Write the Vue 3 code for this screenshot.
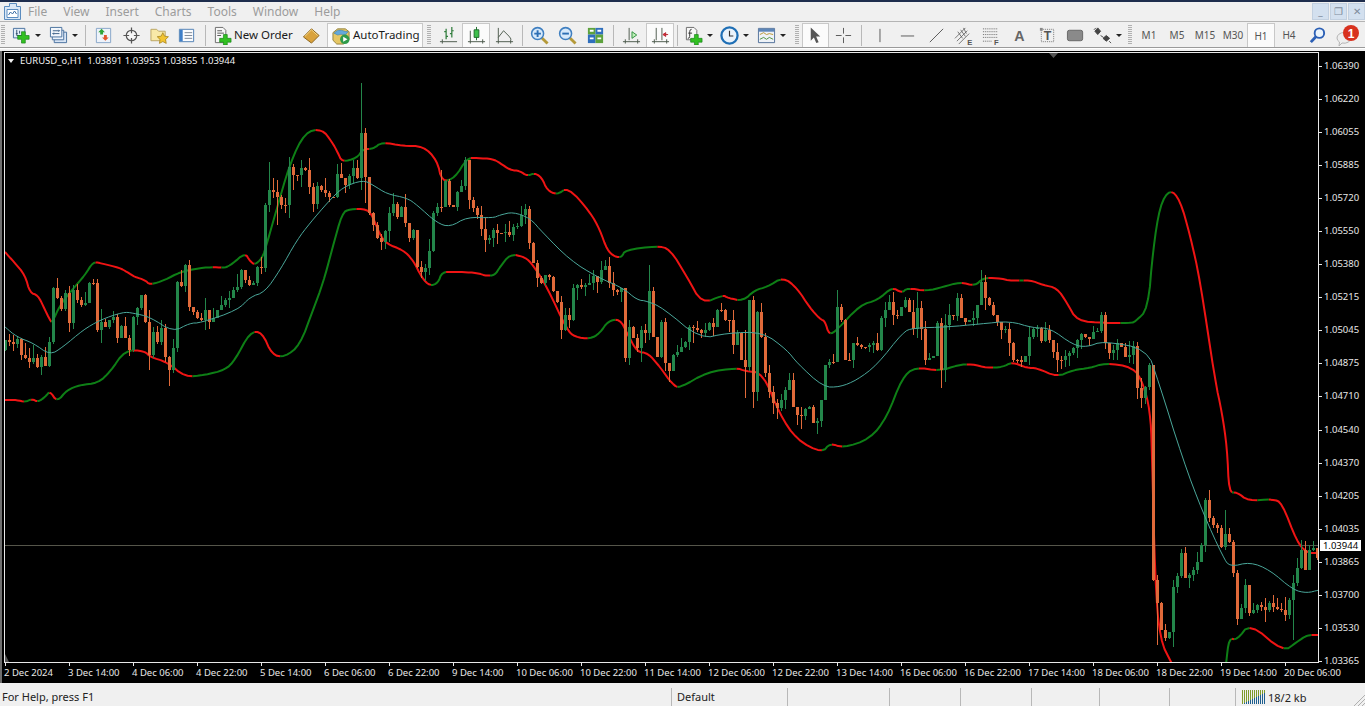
<script setup>
// bands and candles are read off the chart in page pixels, x = 5 + 4n
const upper = [[5,252],[14,262],[25,275],[30,293],[38,295],[45,310],[50,320],[52,323],[60,305],[72,290],[85,275],[93,262],[100,263],[120,268],[127,272],[135,277],[145,280],[150,285],[165,280],[180,272],[200,268],[215,267],[225,268],[232,264],[245,253],[250,261],[255,265],[262,258],[265,250],[275,215],[290,163],[305,132],[322,129],[332,142],[338,153],[342,162],[357,158],[363,149],[373,149],[382,142],[403,146],[423,146],[437,160],[442,182],[455,178],[467,158],[477,158],[493,159],[500,163],[510,170],[520,171],[527,176],[535,173],[542,178],[547,190],[557,195],[568,187],[590,212],[600,230],[607,250],[615,257],[622,257],[625,250],[657,246],[670,249],[687,277],[702,304],[723,295],[728,298],[743,301],[755,290],[767,287],[783,277],[797,288],[810,308],[820,319],[825,321],[829,335],[837,330],[860,305],[878,300],[892,287],[902,293],[907,288],[927,291],[943,287],[960,282],[975,286],[983,278],[997,278],[1013,281],[1030,280],[1043,285],[1057,288],[1067,303],[1077,321],[1105,323],[1130,323],[1135,322],[1148,309],[1153,250],[1160,205],[1170,189],[1180,200],[1190,235],[1200,280],[1215,380],[1222,413],[1227,447],[1229,493],[1237,492],[1248,501],[1273,499],[1282,503],[1297,542],[1307,553],[1319,553]]
const lower = [[5,400],[17,400],[25,402],[32,399],[38,402],[45,397],[50,391],[57,402],[67,390],[80,385],[98,383],[110,372],[125,350],[145,351],[150,357],[167,362],[185,377],[205,375],[225,370],[235,360],[250,332],[262,332],[272,355],[285,357],[300,345],[313,310],[323,283],[332,250],[342,213],[350,209],[367,209],[373,217],[380,235],[387,244],[403,250],[413,260],[422,278],[430,286],[438,283],[442,272],[453,272],[463,272],[477,273],[487,276],[495,275],[500,267],[510,254],[525,257],[533,265],[547,287],[567,330],[575,337],[590,339],[600,333],[608,321],[620,319],[627,333],[637,352],[648,353],[660,367],[673,385],[680,388],[707,372],[737,368],[745,371],[763,373],[780,415],[797,440],[822,453],[830,443],[843,448],[870,439],[887,417],[902,378],[915,367],[940,371],[958,365],[972,364],[987,368],[1003,367],[1012,362],[1027,368],[1037,368],[1057,377],[1073,370],[1090,368],[1105,363],[1133,367],[1143,383],[1150,410],[1152,450],[1155,580],[1160,640],[1172,664]]
const lower2 = [[1226,664],[1229,638],[1237,640],[1250,623],[1283,652],[1297,642],[1307,635],[1319,635]]
const middle = [[5,327],[17,337],[33,343],[50,355],[63,347],[83,330],[100,320],[123,312],[133,313],[150,317],[173,332],[190,323],[200,323],[238,310],[250,297],[265,292],[280,270],[297,240],[310,223],[328,202],[343,187],[363,180],[373,185],[387,194],[407,198],[417,205],[437,223],[450,227],[467,217],[493,218],[500,215],[513,212],[530,218],[543,233],[570,260],[597,277],[623,288],[637,300],[647,301],[663,308],[700,339],[727,333],[763,332],[787,350],[797,363],[823,387],[840,387],[857,380],[877,365],[903,332],[913,328],[947,327],[980,324],[1010,321],[1033,328],[1050,328],[1073,345],[1087,347],[1103,341],[1147,349],[1158,380],[1183,460],[1203,513],[1223,557],[1230,567],[1250,562],[1270,570],[1293,590],[1307,593],[1319,590]]

const sections = [
  [5, [340,342,344,339,355,358,362,358,367,357,366,342,288,298,309,293,323,290,300,305,303,283,283,330,322,327,320,317,338,326,338,350,317,308,295,322,355,332,342,328,357,370,348,282,286,265,307,312,318]],
  [201, [320,310,322,318,310,305,300,298,290,287,270,280,285,283,267,268,205,190,192,197,205,205,167,175,175,168,170,187,204,186,190,193,197,197,174,178,185,176,168,178,133,177]],
  [369, [213,225,238,242,231,213,204,217,207,223,238,230,267,272,268,251,213,207,207,181,205,207,192,186,160,200,208,215,229,240,238,230,233]],
  [505, [232,235,227,226,215,209,243,263,278,283,275,277,291,302,330,315,320,288,285,287,285,283,276,282,270,266,283,290,292,288,358,327,338,348,330,333,291,337,357,322,363,371,355,352,347,342,327,328,330,333,330,323,327,310,310,320,320,345,333,360,367,300,392,312,337,373,392,403,408,400,390,380,407,415,416,409,407,423,421,400,365,362,362,307,320,360,360,343,345,347,347,345,343,350,318,310,302,315,316,307,300,312,329,308,329,360,358,356,323,370,325,315,316,298,318,322,320,318,305,282,298,305,315,322,330,329,343,360,360,362,356,337,329,328,341,330,340,352,360,360,356,353,348,340,334,337,339,332,331,315,343,353,350,343,347,357,355,346,388,398,387,365,580,603,630,638,632,587,576,553,578,575,570,562,545,500,518,525,528,547,534,542,573,619,608,585,613,610,605,607,610,603,607,609,610,615,600,583,568,550,570,550,548,558]]
]
// the few wicks that stand out
const longWicks = {
  361: [83, 190], 365: [128, 203], 265: [203, 272], 269: [162, 212], 277: [180, 225], 441: [170, 212],
  649: [265, 340], 629: [320, 365], 753: [296, 408], 745: [330, 398], 1157: [575, 645], 1293: [575, 640],
  837: [290, 335], 913: [300, 335], 917: [292, 338], 941: [318, 388], 981: [270, 305], 1209: [490, 522],
  985: [275, 310], 1225: [510, 550], 1237: [570, 625]
}

let seed = 7
function rnd() {
  seed = (seed * 16807) % 2147483647
  return seed / 2147483647
}

const closes = {}
for (const [from, list] of sections) {
  list.forEach((y, i) => { closes[from + i * 4] = y })
}

let greenBody = '', greenWick = '', orangeBody = '', orangeWick = ''
let prev = 350
for (let x = 5; x <= 1317; x += 4) {
  const close = closes[x] ?? prev
  const top = Math.min(prev, close)
  const bottom = Math.max(prev, close, top + 1)
  const wick = longWicks[x] || [top - Math.round(rnd() * rnd() * 16), bottom + Math.round(rnd() * rnd() * 16)]
  const body = `M${x - 1} ${top}h3V${bottom}h-3z`
  const stick = `M${x} ${wick[0]}h1V${wick[1]}h-1z`
  if (close < prev) {
    greenBody += body
    greenWick += stick
  } else {
    orangeBody += body
    orangeWick += stick
  }
  prev = close
}

// rounds the corners of the hand-read lines
function smooth(pts) {
  let cur = pts
  for (let n = 0; n < 2; n++) {
    const next = [cur[0]]
    for (let i = 0; i < cur.length - 1; i++) {
      const [ax, ay] = cur[i]
      const [bx, by] = cur[i + 1]
      next.push([ax * 0.75 + bx * 0.25, ay * 0.75 + by * 0.25], [ax * 0.25 + bx * 0.75, ay * 0.25 + by * 0.75])
    }
    next.push(cur[cur.length - 1])
    cur = next
  }
  return cur
}

function toPath(pts) {
  return pts.map((p, i) => (i ? 'L' : 'M') + p[0].toFixed(1) + ' ' + p[1].toFixed(1)).join('')
}

// bands are red while falling and green while rising
function runs(pts) {
  const out = []
  for (let i = 1; i < pts.length; i++) {
    const color = pts[i][1] >= pts[i - 1][1] ? '#f01414' : '#0e7f16'
    const last = out[out.length - 1]
    if (last && last.color === color) last.pts.push(pts[i])
    else out.push({ color, pts: [pts[i - 1], pts[i]] })
  }
  return out.map(r => ({ color: r.color, d: toPath(r.pts) }))
}

const bandRuns = [...runs(smooth(upper)), ...runs(smooth(lower)), ...runs(smooth(lower2))]
const middlePath = toPath(smooth(middle))

const menu = ['File', 'View', 'Insert', 'Charts', 'Tools', 'Window', 'Help']

const prices = ['1.06390','1.06220','1.06055','1.05885','1.05720','1.05550','1.05380','1.05215','1.05045','1.04875','1.04710','1.04540','1.04370','1.04205','1.04035','1.03865','1.03700','1.03530','1.03365']
const times = ['2 Dec 2024','3 Dec 14:00','4 Dec 06:00','4 Dec 22:00','5 Dec 14:00','6 Dec 06:00','6 Dec 22:00','9 Dec 14:00','10 Dec 06:00','10 Dec 22:00','11 Dec 14:00','12 Dec 06:00','12 Dec 22:00','13 Dec 14:00','16 Dec 06:00','16 Dec 22:00','17 Dec 14:00','18 Dec 06:00','18 Dec 22:00','19 Dec 14:00','20 Dec 06:00']

const tools = [
  { kind: 'grip', w: 8 },
  { icon: 'new', w: 35, drop: true }, { kind: 'gap', w: 2 }, { icon: 'profile', w: 35, drop: true },
  { kind: 'sep', w: 9 },
  { icon: 'market', w: 28 }, { icon: 'nav', w: 28 }, { icon: 'folder', w: 28 }, { icon: 'term', w: 27 },
  { kind: 'sep', w: 9 },
  { icon: 'order', w: 88, label: 'New Order' }, { icon: 'book', w: 28 }, { kind: 'gap', w: 2 },
  { icon: 'auto', w: 96, label: 'AutoTrading', on: true },
  { kind: 'grip', w: 11 },
  { icon: 'bars', w: 28 }, { icon: 'candle', w: 28, on: true }, { icon: 'line', w: 28 },
  { kind: 'sep', w: 7 },
  { icon: 'zoomin', w: 28 }, { icon: 'zoomout', w: 28 }, { icon: 'tile', w: 28 },
  { kind: 'sep', w: 8 },
  { icon: 'scroll', w: 29 }, { icon: 'shift', w: 28, on: true },
  { kind: 'sep', w: 6 },
  { icon: 'indic', w: 36, drop: true }, { icon: 'clock', w: 37, drop: true }, { icon: 'templ', w: 37, drop: true },
  { kind: 'grip', w: 12 },
  { icon: 'cursor', w: 27, on: true }, { icon: 'cross', w: 28 },
  { kind: 'sep', w: 8 },
  { icon: 'vline', w: 28 }, { icon: 'hline', w: 29 }, { icon: 'trend', w: 28 }, { icon: 'chan', w: 27 }, { icon: 'fibo', w: 28 },
  { icon: 'atext', w: 28 }, { icon: 'ttext', w: 28 }, { icon: 'rect', w: 28 }, { icon: 'arrows', w: 36, drop: true },
  { kind: 'grip', w: 10 },
  { tf: 'M1', w: 28 }, { tf: 'M5', w: 28 }, { tf: 'M15', w: 28 }, { tf: 'M30', w: 28 }, { tf: 'H1', w: 28, on: true }, { tf: 'H4', w: 28 },
  { icon: 'search', w: 29 }, { icon: 'msg', w: 28, big: true }
]

const statusCells = [672, 116, 102, 71, 71, 68, 70, 66]
const trafficBars = [0, 1, 2, 3, 4, 5, 6, 7, 8, 9, 10, 11]
</script>

<template>
  <div class="terminal">
    <svg class="defs" width="0" height="0">
      <defs>
        <symbol id="new" viewBox="0 0 20 20">
          <path d="M1.5 2.5h12v10h-12z" fill="#e4eefa" stroke="#49719e"/>
          <path d="M5 4v6h6M4 8h2M8 5v3" fill="none" stroke="#33506f"/>
          <path d="M10 6h4v4h4v4h-4v4h-4v-4H6v-4h4z" fill="#32c021" stroke="#17801a" stroke-width=".7"/>
        </symbol>
        <symbol id="profile" viewBox="0 0 20 20">
          <path d="M5.5 6.5h13v11h-13z" fill="#d8e5f5" stroke="#49719e"/>
          <path d="M3.5 4.5h12v10h-12z" fill="#eaf1fa" stroke="#49719e"/>
          <path d="M1.5 1.5h12v10h-12z" fill="#f3f7fc" stroke="#49719e"/>
          <path d="M4 5h7M4 8h7M10 4l1 1-1 1M5 7L4 8l1 1" fill="none" stroke="#3a5f86"/>
        </symbol>
        <symbol id="market" viewBox="0 0 20 20">
          <path d="M2.5 2.5h15v15h-15z" fill="#eef3fa" stroke="#87a5c8"/>
          <path d="M8 3l3.500 3.500H9.500V9h-3V6.500H4.500z" fill="#2fa53a"/>
          <path d="M12 15.500L8.500 12h2V9.500h3V12h2z" fill="#e2552c"/>
        </symbol>
        <symbol id="nav" viewBox="0 0 20 20">
          <circle cx="10" cy="10" r="5.5" fill="#f6f6f6" stroke="#555" stroke-width="1.3"/>
          <path d="M10 1.500v6M10 12.500v6M1.500 10h6M12.500 10h6" stroke="#555" stroke-width="1.3"/>
        </symbol>
        <symbol id="folder" viewBox="0 0 20 20">
          <path d="M1 3.500h6l2 2h7v10H1z" fill="#f8e9a8" stroke="#b9a463"/>
          <path d="M13.500 7l1.800 3.700 4.100.6-3 2.900.7 4.100-3.600-1.900-3.600 1.900.7-4.100-3-2.900 4.100-.6z" fill="#f2c431" stroke="#a4801d" stroke-width=".8"/>
        </symbol>
        <symbol id="term" viewBox="0 0 20 20">
          <path d="M2.5 3.500h15v13h-15z" fill="#fbfcfe" stroke="#4f7fb4"/>
          <path d="M3 4h3v12H3z" fill="#3f7fc8"/>
          <path d="M8 7h8M8 10h8M8 13h8" stroke="#7b8797"/>
        </symbol>
        <symbol id="order" viewBox="0 0 20 20">
          <path d="M2.5 1.500h8l3 3v13h-11z" fill="#f7f7f7" stroke="#6a6a6a"/>
          <path d="M4.500 5h5M4.500 7.500h7M4.500 10h4" stroke="#555"/>
          <path d="M11 9h4v4h4v4h-4v3h-4v-3H7v-4h4z" fill="#32c021" stroke="#17801a" stroke-width=".7"/>
        </symbol>
        <symbol id="book" viewBox="0 0 20 20">
          <path d="M1.500 11.500L10 3l8 7-8 8z" fill="#d9a23c" stroke="#8a6218"/>
          <path d="M3 11l7-7 6.500 6" fill="none" stroke="#f3d98c"/>
        </symbol>
        <symbol id="auto" viewBox="0 0 20 20">
          <path d="M1 7l5-4h8l4 3v8l-6 5H5l-4-4z" fill="#e6c765" stroke="#94823e"/>
          <path d="M2 7.500Q6 3 10 4.500t7 1.500L14 9.500Q9 8 6 9.500z" fill="#63a8dc" stroke="#3d7fae" stroke-width=".6"/>
          <circle cx="13.5" cy="14" r="5" fill="#2f9b4a"/>
          <path d="M11.800 11.300l4.500 2.700-4.500 2.700z" fill="#fff"/>
        </symbol>
        <symbol id="bars" viewBox="0 0 20 20">
          <path d="M1 16.500h18M3.500 18.500V14" stroke="#4c5a4c" fill="none"/>
          <path d="M7.500 3v11M5.500 6h2M7.500 11h2M13.500 1v11M11.500 8h2M13.500 5h2" stroke="#2f7c3b" stroke-width="1.3" fill="none"/>
        </symbol>
        <symbol id="candle" viewBox="0 0 20 20">
          <path d="M1 16.500h18M3.500 18.500V5M16.500 18.500V14" stroke="#4c5a4c" fill="none"/>
          <path d="M10 1v14" stroke="#1c6a2a"/>
          <path d="M7.500 4h5v8h-5z" fill="#3dc04a" stroke="#1c6a2a"/>
        </symbol>
        <symbol id="line" viewBox="0 0 20 20">
          <path d="M1 16.500h18M3.500 18.500V2M16.500 18.500V14" stroke="#4c5a4c" fill="none"/>
          <path d="M3.500 12L9 5l6 6 2 3" stroke="#4c5a4c" fill="none"/>
        </symbol>
        <symbol id="zoomin" viewBox="0 0 20 20">
          <path d="M12 12l6.500 6.500" stroke="#b59a3a" stroke-width="3"/>
          <circle cx="8" cy="8" r="6.3" fill="#d7e9fa" stroke="#3f7fc0" stroke-width="1.6"/>
          <path d="M4.500 8h7M8 4.500v7" stroke="#2d6fb5" stroke-width="2"/>
        </symbol>
        <symbol id="zoomout" viewBox="0 0 20 20">
          <path d="M12 12l6.500 6.500" stroke="#b59a3a" stroke-width="3"/>
          <circle cx="8" cy="8" r="6.3" fill="#d7e9fa" stroke="#3f7fc0" stroke-width="1.6"/>
          <path d="M4.500 8h7" stroke="#2d6fb5" stroke-width="2"/>
        </symbol>
        <symbol id="tile" viewBox="0 0 20 20">
          <path d="M2 2h8v7H2z" fill="#5da23d"/><path d="M10 2h8v7h-8z" fill="#2f6fbd"/>
          <path d="M2 9h8v9H2z" fill="#2f6fbd"/><path d="M10 9h8v9h-8z" fill="#5da23d"/>
          <path d="M4 5h4M12 5h4M4 13h4M12 13h4" stroke="#fff" stroke-width="2"/>
        </symbol>
        <symbol id="scroll" viewBox="0 0 20 20">
          <path d="M1 16.500h18M3.500 18.500V14M16.500 18.500V14M7.500 2v13" stroke="#4c5a4c" fill="none"/>
          <path d="M10.500 6l5 3.500-5 3.500z" fill="#bff0b8" stroke="#2f8f3f"/>
        </symbol>
        <symbol id="shift" viewBox="0 0 20 20">
          <path d="M1 16.500h18M3.500 18.500V14M16.500 18.500V14M5.500 2v13M11.500 2v13" stroke="#4c5a4c" fill="none"/>
          <path d="M18 9h-3M15.500 7l-3 2 3 2z" stroke="#b8232e" fill="#d8323c"/>
        </symbol>
        <symbol id="indic" viewBox="0 0 20 20">
          <path d="M2.5 1.500h8l3 3v10h-11z" fill="#f7f7f7" stroke="#6a6a6a"/>
          <path d="M8 3.500Q6 3.500 6 6v5q0 2-2 2M4.500 7.500h4" fill="none" stroke="#333"/>
          <path d="M11 9h4v4h4v4h-4v3h-4v-3H7v-4h4z" fill="#32c021" stroke="#17801a" stroke-width=".7"/>
        </symbol>
        <symbol id="clock" viewBox="0 0 20 20">
          <circle cx="10" cy="10" r="8.5" fill="#eaf3fb" stroke="#1f6fb5" stroke-width="2.4"/>
          <path d="M10 5v5.500h4" fill="none" stroke="#333" stroke-width="1.2"/>
        </symbol>
        <symbol id="templ" viewBox="0 0 20 20">
          <path d="M1.5 2.500h17v15h-17z" fill="#eef2f7" stroke="#51709a"/>
          <path d="M2 3h16v3H2z" fill="#5d86b8"/>
          <path d="M3 9l4-2 3 2 3-1 4 1" fill="none" stroke="#b89732"/>
          <path d="M3 14l4-2 3 2 3-2 4 2" fill="none" stroke="#4d8f3c"/>
        </symbol>
        <symbol id="cursor" viewBox="0 0 20 20">
          <path d="M5 1.500l10 9.500h-4.300l2.600 6-2.500 1-2.500-6L5 15.500z" fill="#555"/>
        </symbol>
        <symbol id="cross" viewBox="0 0 20 20">
          <path d="M10 2v6M10 12v6M2 10h6M12 10h6" stroke="#555"/>
        </symbol>
        <symbol id="vline" viewBox="0 0 20 20"><path d="M10.500 3v14" stroke="#555"/></symbol>
        <symbol id="hline" viewBox="0 0 20 20"><path d="M3 10.500h14" stroke="#555"/></symbol>
        <symbol id="trend" viewBox="0 0 20 20"><path d="M3 17L17 3" stroke="#555"/></symbol>
        <symbol id="chan" viewBox="0 0 20 20">
          <path d="M1 13L12 2M3 16L14 5M5 19L16 8M4 6l5 7M7 4l5 7M10 2l3 6" stroke="#555" stroke-width=".8" fill="none"/>
          <text x="14" y="19.500" font-family="Liberation Sans, sans-serif" font-size="8" font-weight="700" fill="#555">E</text>
        </symbol>
        <symbol id="fibo" viewBox="0 0 20 20">
          <path d="M1 3h15M1 6h15M1 9h15M1 12h15M1 16h10" stroke="#666" stroke-dasharray="1 1" fill="none"/>
          <text x="12.500" y="19.500" font-family="Liberation Sans, sans-serif" font-size="8" font-weight="700" fill="#555">F</text>
        </symbol>
        <symbol id="atext" viewBox="0 0 20 20">
          <text x="10" y="16" text-anchor="middle" font-family="Liberation Sans, sans-serif" font-size="15" font-weight="700" fill="#666">A</text>
        </symbol>
        <symbol id="ttext" viewBox="0 0 20 20">
          <path d="M3.500 3.500h13v13h-13z" fill="none" stroke="#777" stroke-dasharray="1 1"/>
          <path d="M2 2h3v3H2z" fill="#888"/>
          <text x="10" y="15" text-anchor="middle" font-family="Liberation Sans, sans-serif" font-size="13" font-weight="700" fill="#555">T</text>
        </symbol>
        <symbol id="rect" viewBox="0 0 20 20">
          <rect x="1.5" y="4.5" width="16" height="11" rx="2" fill="#8a8a8a" stroke="#666"/>
        </symbol>
        <symbol id="arrows" viewBox="0 0 20 20">
          <path d="M5 2l3 3.500-3 3.500-3-3.500zM3 2L1 4M14 10l3.500 3-3.500 3-3.500-3zM8 10l3 2M17 16l2 2" fill="#444" stroke="#444"/>
        </symbol>
        <symbol id="search" viewBox="0 0 20 20">
          <circle cx="12" cy="7.500" r="5" fill="#eaf3fb" stroke="#2b5fb5" stroke-width="2"/>
          <path d="M8.500 11L3 17" stroke="#2b5fb5" stroke-width="3"/>
        </symbol>
        <symbol id="msg" viewBox="0 0 26 26">
          <path d="M4 17a7 5.500 0 0 1 14 0a7 5.500 0 0 1-9 5l-3 3 .5-4q-2.500-1.500-2.500-4z" fill="#eee" stroke="#b5b5b5"/>
          <circle cx="18" cy="12" r="8" fill="#d8321f"/>
          <text x="18" y="16.500" text-anchor="middle" font-family="Liberation Sans, sans-serif" font-size="12" font-weight="700" fill="#fff">1</text>
        </symbol>
      </defs>
    </svg>

    <div class="top-stripe"></div>

    <div class="menubar">
      <svg class="app-icon" viewBox="0 0 17 17">
        <path d="M.5 3.500h5v-3h7v3h4v13H.5z" fill="#dbe8f6" stroke="#5b8cbf"/>
        <path d="M3 6.500h11v8H3z" fill="#fff" stroke="#5b8cbf"/>
        <path d="M4.500 12l2-3 2 2 2-3 2 3" fill="none" stroke="#3b6ea5"/>
      </svg>
      <span v-for="m in menu" :key="m" class="menu-item">{{ m }}</span>
      <div class="win-btns">
        <span class="win-btn">_</span>
        <span class="win-btn">❐</span>
        <span class="win-btn">✕</span>
      </div>
    </div>

    <div class="toolbar">
      <template v-for="(t, i) in tools" :key="i">
        <div v-if="t.kind" :class="['tb-' + t.kind]" :style="{ width: t.w + 'px' }"></div>
        <div v-else class="tb-btn" :class="{ on: t.on, tf: t.tf, labeled: t.label, drop: t.drop }" :style="{ width: t.w + 'px' }">
          <template v-if="t.tf">{{ t.tf }}</template>
          <template v-else>
            <svg class="tb-icon" :class="{ big: t.big }"><use :href="'#' + t.icon" /></svg>
            <span v-if="t.label" class="tb-label">{{ t.label }}</span>
            <span v-if="t.drop" class="caret"></span>
          </template>
        </div>
      </template>
    </div>

    <div class="chart">
      <div class="plot">
        <svg class="plot-svg" viewBox="5 53 1313 609">
          <path d="M5 545.5H1318" stroke="#55554a" fill="none" shape-rendering="crispEdges"/>
          <path d="M1049 53h9l-4.500 5z" fill="#555"/>
          <path d="M5 654l4 8H5z" fill="#555"/>
          <path v-for="(r, i) in bandRuns" :key="i" :d="r.d" :stroke="r.color" stroke-width="2" fill="none" stroke-linejoin="round"/>
          <g shape-rendering="crispEdges">
            <path :d="greenWick" fill="#23864a"/>
            <path :d="orangeWick" fill="#e06a3a"/>
            <path :d="greenBody" fill="#23864a"/>
            <path :d="orangeBody" fill="#e06a3a"/>
          </g>
          <path :d="middlePath" stroke="#4aa79a" stroke-width="1" fill="none"/>
        </svg>
        <div class="legend"><span class="legend-caret"></span>EURUSD_o,H1&nbsp; 1.03891 1.03953 1.03855 1.03944</div>
      </div>

      <div class="price-axis">
        <div v-for="p in prices" :key="p" class="price">{{ p }}</div>
        <div class="price-now">1.03944</div>
      </div>

      <div class="time-axis">
        <div v-for="t in times" :key="t" class="time">{{ t }}</div>
      </div>
    </div>

    <div class="statusbar">
      <div v-for="(w, i) in statusCells" :key="i" class="status-cell" :style="{ width: w + 'px' }">
        <template v-if="i === 0">For Help, press F1</template>
        <template v-if="i === 1">Default</template>
      </div>
      <div class="traffic">
        <svg width="23" height="14" viewBox="0 0 23 14">
          <g v-for="b in trafficBars" :key="b">
            <rect :x="b * 2" y="0" width="1" :height="14 - b" fill="#7f9a2a"/>
            <rect :x="b * 2" :y="14 - b" width="1" :height="b" fill="#1f5f8f"/>
          </g>
        </svg>
        <span>18/2 kb</span>
      </div>
      <svg class="resize-grip" width="11" height="11" viewBox="0 0 11 11">
        <path d="M0 11L11 0M4 11l7-7M8 11l3-3" stroke="#b0b0b0" fill="none"/>
      </svg>
    </div>
  </div>
</template>

<style scoped>
.terminal {
  display: flex;
  flex-direction: column;
  width: 1365px;
  height: 706px;
  overflow: hidden;
  background: #f0f0f0;
  font-family: "Noto Sans", "Liberation Sans", sans-serif;
}
.defs {
  position: absolute;
}
.top-stripe {
  height: 2px;
  background: #1e2d4d;
  flex: none;
}

/* menu */
.menubar {
  display: flex;
  align-items: center;
  gap: 16px;
  height: 19px;
  flex: none;
  font-size: 12px;
  color: #9c9c9c;
  padding-left: 4px;
}
.app-icon {
  width: 17px;
  height: 17px;
  margin-right: -9px;
}
.menu-item {
  line-height: 19px;
}
.win-btns {
  display: flex;
  margin-left: auto;
  gap: 1px;
}
.win-btn {
  width: 17px;
  height: 17px;
  background: #d3e0ef;
  border: 1px solid #c2d0e0;
  box-sizing: border-box;
  color: #7f8c9c;
  font-size: 10px;
  line-height: 15px;
  text-align: center;
}

/* toolbar */
.toolbar {
  display: flex;
  height: 27px;
  flex: none;
  box-sizing: border-box;
  border-top: 1px solid #b4b4b4;
  border-bottom: 1px solid #9a9a9a;
  box-shadow: 0 1px 0 #fff;
  margin-bottom: 3px;
  padding-top: 1px;
}
.tb-sep,
.tb-grip,
.tb-gap {
  flex: none;
  position: relative;
}
.tb-sep::after {
  content: "";
  position: absolute;
  left: 50%;
  top: 2px;
  bottom: 1px;
  width: 1px;
  background: #b8b8b8;
}
.tb-grip::after {
  content: "";
  position: absolute;
  right: 3px;
  top: 2px;
  bottom: 2px;
  width: 4px;
  background: repeating-linear-gradient(to bottom, #b0b0b0 0 1px, transparent 1px 2px);
}
.tb-btn {
  flex: none;
  display: flex;
  align-items: center;
  justify-content: center;
  box-sizing: border-box;
  font-size: 10px;
  color: #555;
}
.tb-btn.on {
  background: #fbfbfb;
  border: 1px solid #c8c8c8;
  border-bottom: none;
}
.tb-btn.labeled {
  justify-content: flex-start;
  padding-left: 4px;
  gap: 2px;
  color: #1a1a1a;
  font-size: 11.5px;
  white-space: nowrap;
}
.tb-label {
  margin-top: -2px;
}
.tb-btn.drop {
  justify-content: flex-start;
  padding-left: 4px;
  gap: 4px;
}
.tb-icon {
  width: 19px;
  height: 19px;
  flex: none;
}
.tb-icon.big {
  width: 26px;
  height: 26px;
  margin-top: -2px;
}
.caret {
  width: 0;
  height: 0;
  border-left: 3px solid transparent;
  border-right: 3px solid transparent;
  border-top: 3px solid #222;
}

/* chart */
.chart {
  flex: 1;
  display: grid;
  grid-template-columns: 1319px 46px;
  grid-template-rows: 612px 20px;
  background: #000;
  color: #e8e8e8;
  font-size: 9.5px;
  position: relative;
  border-left: 2px solid #6e6e6e;
}
.plot {
  grid-column: 1;
  grid-row: 1;
  margin: 1px 0 0 2px;
  border: 1px solid #e8e8e8;
  position: relative;
  width: 1313px;
}
.plot-svg {
  display: block;
  width: 1313px;
  height: 609px;
  overflow: hidden;
}
.legend {
  position: absolute;
  left: 1px;
  top: 2px;
  display: flex;
  align-items: center;
  line-height: 12px;
  white-space: pre;
  color: #f2f2f2;
}
.legend-caret {
  width: 0;
  height: 0;
  margin: 0 6px 0 2px;
  border-left: 3.5px solid transparent;
  border-right: 3.5px solid transparent;
  border-top: 4px solid #f2f2f2;
}
.price-axis {
  grid-column: 2;
  grid-row: 1 / span 2;
  margin-left: -2px;
  display: flex;
  flex-direction: column;
  justify-content: space-between;
  padding: 9px 0 16px;
  position: relative;
}
.price {
  line-height: 12px;
  padding-left: 5px;
  position: relative;
}
.price::before {
  content: "";
  position: absolute;
  left: 0;
  top: 6px;
  width: 3px;
  height: 1px;
  background: #e8e8e8;
}
.price-now {
  position: absolute;
  left: 1px;
  top: 489px;
  width: 41px;
  height: 11px;
  line-height: 11px;
  background: #fff;
  color: #000;
  text-align: center;
}
.time-axis {
  grid-column: 1;
  grid-row: 2;
  display: flex;
  padding-left: 2px;
}
.time {
  flex: none;
  width: 64px;
  padding-top: 4px;
  line-height: 12px;
  white-space: nowrap;
  position: relative;
}
.time::before {
  content: "";
  position: absolute;
  left: 1px;
  top: 0;
  width: 1px;
  height: 3px;
  background: #e8e8e8;
}

/* status */
.statusbar {
  display: flex;
  height: 23px;
  flex: none;
  align-items: flex-end;
  font-size: 11px;
  color: #222;
  position: relative;
}
.status-cell {
  height: 18px;
  box-sizing: border-box;
  padding-left: 2px;
  line-height: 18px;
  border-right: 1px solid #b8b8b8;
}
.status-cell + .status-cell {
  padding-left: 5px;
}
.traffic {
  display: flex;
  align-items: center;
  gap: 3px;
  height: 18px;
  padding-left: 6px;
}
.resize-grip {
  position: absolute;
  right: 0;
  bottom: 0;
}
</style>
